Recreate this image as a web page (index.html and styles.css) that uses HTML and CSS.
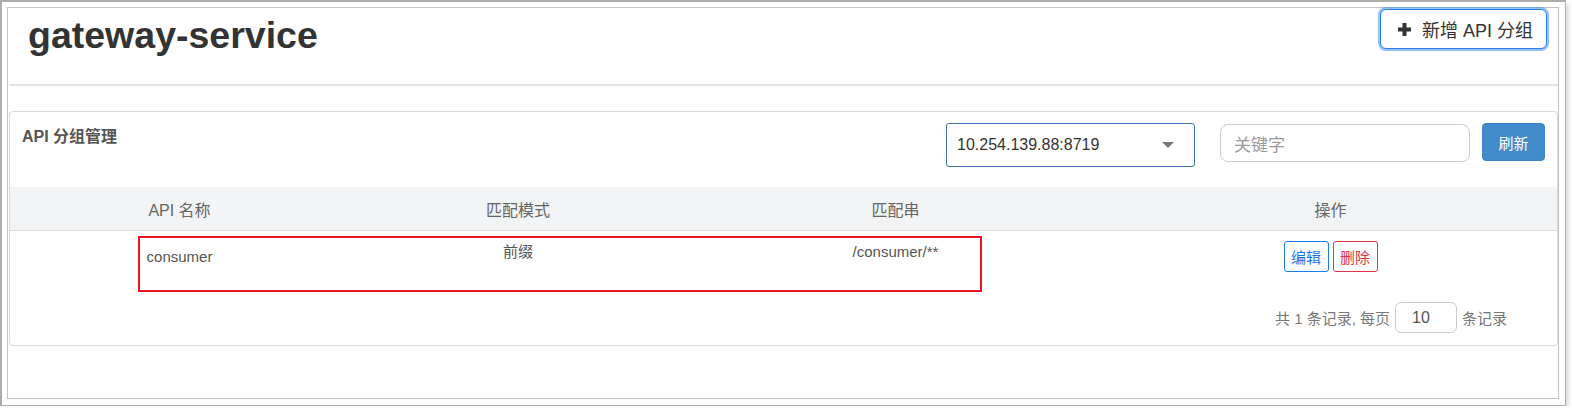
FILE: index.html
```html
<!DOCTYPE html>
<html lang="zh-CN">
<head>
<meta charset="utf-8">
<title>gateway-service</title>
<link rel="stylesheet" href="styles.css">
</head>
<body>
<div class="window">
  <div class="page">
    <div class="page-header">
      <h1 class="title">gateway-service</h1>
      <button class="btn-add" type="button">
        <svg class="plus" width="13" height="13" viewBox="0 0 13 13"><rect x="4.5" y="0" width="4" height="13" fill="#333"/><rect x="0" y="4.5" width="13" height="4" fill="#333"/></svg>
        <span>新增 API 分组</span>
      </button>
    </div>

    <div class="panel">
      <div class="panel-top">
        <div class="panel-title">API 分组管理</div>
        <div class="select">
          <span>10.254.139.88:8719</span>
          <span class="caret"></span>
        </div>
        <div class="search"><span class="placeholder">关键字</span></div>
        <button class="btn-refresh" type="button">刷新</button>
      </div>

      <div class="table">
        <div class="thead">
          <div>API 名称</div>
          <div>匹配模式</div>
          <div>匹配串</div>
          <div>操作</div>
        </div>
        <div class="tbody">
          <div class="row">
            <div class="cell c-name">consumer</div>
            <div class="cell c-mode">前缀</div>
            <div class="cell c-str">/consumer/**</div>
            <div class="cell c-ops">
              <button class="btn-op edit" type="button">编辑</button>
              <button class="btn-op del" type="button">删除</button>
            </div>
          </div>
          <div class="highlight"></div>
        </div>
      </div>

      <div class="pager">
        <span>共 1 条记录, 每页</span>
        <span class="page-size">10</span>
        <span>条记录</span>
      </div>
    </div>
  </div>
</div>
</body>
</html>
```

FILE: styles.css
```css
* { box-sizing: border-box; }

html, body {
  margin: 0;
  padding: 0;
  background: #ffffff;
}

body {
  font-family: "Liberation Sans", "Noto Sans CJK SC", Arial, sans-serif;
  color: #333;
}

.window {
  width: 1566px;
  height: 406px;
  border-style: solid;
  border-color: #adadad;
  border-width: 2px 1px 1px 2px;
  padding: 5px 6px 6px 5px;
  background: #fff;
  box-shadow: 3px 4px 4px rgba(0, 0, 0, 0.13);
}

.page {
  height: 100%;
  border: 1px solid #c2c2c2;
  padding: 0 0 0 1px;
}

.page-header {
  height: 78px;
  border-bottom: 2px solid #e5e5e5;
  display: flex;
  justify-content: space-between;
  align-items: flex-start;
}

.title {
  margin: 7px 0 0 19px;
  font-size: 37.5px;
  line-height: 41px;
  font-weight: bold;
  color: #333;
}

.btn-add {
  margin: 1px 11px 0 0;
  width: 167px;
  height: 40px;
  padding: 0 0 0 17px;
  display: flex;
  align-items: center;
  gap: 11px;
  background: #fff;
  border: 1px solid #2a80f0;
  border-radius: 6px;
  box-shadow: 0 0 0 2px rgba(60, 145, 250, 0.55);
  font-family: "Liberation Sans", "Noto Sans CJK SC", sans-serif;
  font-size: 18px;
  color: #333;
}

.plus { flex: none; }

.panel {
  margin-top: 25px;
  border: 1px solid #d9d9d9;
  border-radius: 4px;
}

.panel-top {
  height: 75px;
  padding: 11px 12px 0 12px;
  display: flex;
  align-items: flex-start;
}

.panel-title {
  flex: 1;
  padding-top: 3px;
  font-size: 16px;
  line-height: 22px;
  font-weight: bold;
  color: #555;
}

.select {
  width: 249px;
  height: 44px;
  border: 1px solid #3f70b3;
  border-radius: 3px;
  padding: 0 20px 0 10px;
  display: flex;
  align-items: center;
  justify-content: space-between;
  font-size: 16px;
  color: #333;
}

.caret {
  width: 0;
  height: 0;
  border-left: 6px solid transparent;
  border-right: 6px solid transparent;
  border-top: 6px solid #777;
}

.search {
  margin: 1px 0 0 25px;
  width: 250px;
  height: 38px;
  border: 1px solid #cccccc;
  border-radius: 8px;
  padding: 0 13px;
  display: flex;
  align-items: center;
}

.placeholder {
  font-size: 17px;
  color: #9a9a9a;
}

.btn-refresh {
  margin-left: 12px;
  width: 63px;
  height: 38px;
  border: 1px solid #3f84c4;
  border-radius: 4px;
  background: #428bca;
  color: #fff;
  font-family: "Liberation Sans", "Noto Sans CJK SC", sans-serif;
  font-size: 15px;
  padding: 0;
}

.thead,
.row {
  display: grid;
  grid-template-columns: 339px 338px 417px 1fr;
}

.thead {
  height: 44px;
  background: #f3f4f5;
  border-bottom: 1px solid #dddddd;
  align-items: center;
  text-align: center;
  font-size: 16px;
  color: #666;
}

.tbody {
  position: relative;
}

.row {
  height: 60px;
  align-items: start;
  text-align: center;
  font-size: 15px;
  line-height: 20px;
  color: #555;
}

.c-name { padding-top: 16px; }
.c-mode { padding-top: 11px; }
.c-str { padding-top: 11px; }

.c-ops {
  padding-top: 10px;
  display: flex;
  justify-content: center;
  gap: 4px;
}

.btn-op {
  width: 45px;
  height: 31px;
  padding: 0;
  background: #fff;
  border-radius: 3px;
  font-family: "Liberation Sans", "Noto Sans CJK SC", sans-serif;
  font-size: 15px;
}

.btn-op.edit {
  border: 1px solid #1a7cf0;
  color: #1a73e8;
}

.btn-op.del {
  border: 1px solid #dc3545;
  color: #dc3545;
}

.highlight {
  position: absolute;
  left: 128px;
  top: 5px;
  width: 844px;
  height: 56px;
  border: 2px solid #e8141e;
}

.pager {
  padding: 11px 50px 12px 0;
  display: flex;
  justify-content: flex-end;
  align-items: center;
  gap: 5px;
  font-size: 15px;
  color: #777;
}

.page-size {
  width: 62px;
  height: 31px;
  border: 1px solid #cccccc;
  border-radius: 6px;
  padding-left: 16px;
  display: flex;
  align-items: center;
  font-size: 16px;
  color: #555;
}
```
